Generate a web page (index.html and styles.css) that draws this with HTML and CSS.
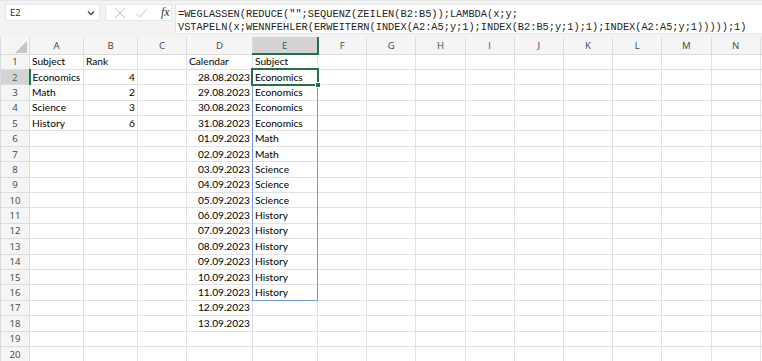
FILE: index.html
```html
<!DOCTYPE html>
<html lang="en">

<head>
    <meta charset="UTF-8">
    <title>Sheet</title>
    <link rel="stylesheet" href="styles.css">
</head>

<body>
    <div class="bar">
        <div class="namebox">
            <span>E2</span>
            <svg class="chev" width="8" height="6" viewBox="0 0 8 6"><path d="M1 1.5 L4 4.5 L7 1.5" fill="none" stroke="#444" stroke-width="1.3"/></svg>
        </div>
        <div class="fxbox">
            <svg width="12" height="12" viewBox="0 0 12 12"><path d="M1 1 L11 11 M11 1 L1 11" stroke="#c4c4c4" stroke-width="1"/></svg>
            <svg width="13" height="12" viewBox="0 0 13 12"><path d="M1 6.5 L4.5 10 L12 2" fill="none" stroke="#c4c4c4" stroke-width="1"/></svg>
            <span class="fx">fx</span>
        </div>
        <div class="formula">=WEGLASSEN(REDUCE("";SEQUENZ(ZEILEN(B2:B5));LAMBDA(x;y;<br>VSTAPELN(x;WENNFEHLER(ERWEITERN(INDEX(A2:A5;y;1);INDEX(B2:B5;y;1);1);INDEX(A2:A5;y;1)))));1)</div>
    </div>

    <div class="sheet">
        <table class="grid">
            <colgroup>
                <col class="c-row">
                <col class="c-a"><col class="c-b"><col class="c-c"><col class="c-d"><col class="c-e">
                <col class="c-n"><col class="c-n"><col class="c-n"><col class="c-n"><col class="c-n">
                <col class="c-n"><col class="c-n"><col class="c-n"><col class="c-n"><col class="c-n">
            </colgroup>
            <tr class="head">
                <th class="corner"><svg width="12" height="12" viewBox="0 0 12 12"><polygon points="12,0 12,12 0,12" fill="#c6c6c6"/></svg></th>
                <th>A</th><th>B</th><th>C</th><th>D</th><th class="on">E</th><th>F</th><th>G</th><th>H</th><th>I</th><th>J</th><th>K</th><th>L</th><th>M</th><th>N</th><th></th>
            </tr>
            <tr><th>1</th><td>Subject</td><td>Rank</td><td></td><td>Calendar</td><td>Subject</td><td></td><td></td><td></td><td></td><td></td><td></td><td></td><td></td><td></td><td></td></tr>
            <tr><th class="on">2</th><td>Economics</td><td class="num">4</td><td></td><td class="num">28.08.2023</td><td>Economics</td><td></td><td></td><td></td><td></td><td></td><td></td><td></td><td></td><td></td><td></td></tr>
            <tr><th>3</th><td>Math</td><td class="num">2</td><td></td><td class="num">29.08.2023</td><td>Economics</td><td></td><td></td><td></td><td></td><td></td><td></td><td></td><td></td><td></td><td></td></tr>
            <tr><th>4</th><td>Science</td><td class="num">3</td><td></td><td class="num">30.08.2023</td><td>Economics</td><td></td><td></td><td></td><td></td><td></td><td></td><td></td><td></td><td></td><td></td></tr>
            <tr><th>5</th><td>History</td><td class="num">6</td><td></td><td class="num">31.08.2023</td><td>Economics</td><td></td><td></td><td></td><td></td><td></td><td></td><td></td><td></td><td></td><td></td></tr>
            <tr><th>6</th><td></td><td></td><td></td><td class="num">01.09.2023</td><td>Math</td><td></td><td></td><td></td><td></td><td></td><td></td><td></td><td></td><td></td><td></td></tr>
            <tr><th>7</th><td></td><td></td><td></td><td class="num">02.09.2023</td><td>Math</td><td></td><td></td><td></td><td></td><td></td><td></td><td></td><td></td><td></td><td></td></tr>
            <tr><th>8</th><td></td><td></td><td></td><td class="num">03.09.2023</td><td>Science</td><td></td><td></td><td></td><td></td><td></td><td></td><td></td><td></td><td></td><td></td></tr>
            <tr><th>9</th><td></td><td></td><td></td><td class="num">04.09.2023</td><td>Science</td><td></td><td></td><td></td><td></td><td></td><td></td><td></td><td></td><td></td><td></td></tr>
            <tr><th>10</th><td></td><td></td><td></td><td class="num">05.09.2023</td><td>Science</td><td></td><td></td><td></td><td></td><td></td><td></td><td></td><td></td><td></td><td></td></tr>
            <tr><th>11</th><td></td><td></td><td></td><td class="num">06.09.2023</td><td>History</td><td></td><td></td><td></td><td></td><td></td><td></td><td></td><td></td><td></td><td></td></tr>
            <tr><th>12</th><td></td><td></td><td></td><td class="num">07.09.2023</td><td>History</td><td></td><td></td><td></td><td></td><td></td><td></td><td></td><td></td><td></td><td></td></tr>
            <tr><th>13</th><td></td><td></td><td></td><td class="num">08.09.2023</td><td>History</td><td></td><td></td><td></td><td></td><td></td><td></td><td></td><td></td><td></td><td></td></tr>
            <tr><th>14</th><td></td><td></td><td></td><td class="num">09.09.2023</td><td>History</td><td></td><td></td><td></td><td></td><td></td><td></td><td></td><td></td><td></td><td></td></tr>
            <tr><th>15</th><td></td><td></td><td></td><td class="num">10.09.2023</td><td>History</td><td></td><td></td><td></td><td></td><td></td><td></td><td></td><td></td><td></td><td></td></tr>
            <tr><th>16</th><td></td><td></td><td></td><td class="num">11.09.2023</td><td>History</td><td></td><td></td><td></td><td></td><td></td><td></td><td></td><td></td><td></td><td></td></tr>
            <tr><th>17</th><td></td><td></td><td></td><td class="num">12.09.2023</td><td></td><td></td><td></td><td></td><td></td><td></td><td></td><td></td><td></td><td></td><td></td></tr>
            <tr><th>18</th><td></td><td></td><td></td><td class="num">13.09.2023</td><td></td><td></td><td></td><td></td><td></td><td></td><td></td><td></td><td></td><td></td><td></td></tr>
            <tr><th>19</th><td></td><td></td><td></td><td></td><td></td><td></td><td></td><td></td><td></td><td></td><td></td><td></td><td></td><td></td><td></td></tr>
            <tr><th>20</th><td></td><td></td><td></td><td></td><td></td><td></td><td></td><td></td><td></td><td></td><td></td><td></td><td></td><td></td><td></td></tr>
        </table>

        <!-- spill range E2:E16 and active cell E2 -->
        <div class="spill"></div>
        <div class="active"><span class="handle"></span></div>
    </div>
</body>

</html>
```

FILE: styles.css
```css
body {
    margin: 0;
    background: #fff;
    font-family: Lato, "Liberation Sans", sans-serif;
    overflow: hidden;
}

.bar {
    display: flex;
    align-items: flex-start;
    height: 37px;
    box-sizing: border-box;
    padding: 4px 0 0 5px;
    background: #f3f3f3;
    border-top: 1px solid #e4e4e4;
}

.namebox {
    display: flex;
    align-items: center;
    justify-content: space-between;
    width: 95px;
    height: 17px;
    box-sizing: border-box;
    margin-top: -1px;
    padding: 0 4px 0 4px;
    background: #fff;
    border: 1px solid #e6e6e6;
    font-family: "Open Sans", sans-serif;
    font-size: 9.5px;
    color: #222;
}

.fxbox {
    display: flex;
    align-items: center;
    gap: 9px;
    width: 67px;
    height: 17px;
    box-sizing: border-box;
    margin: -1px 0 0 5px;
    padding: 0 0 0 8px;
    background: #fff;
    border: 1px solid #e6e6e6;
}

.fx {
    font-family: "Liberation Serif", serif;
    font-style: italic;
    font-size: 12px;
    color: #333;
    margin-left: 4px;
}

.formula {
    flex: 1;
    height: 30px;
    box-sizing: border-box;
    margin: -1px 0 0 3px;
    padding: 3px 2px 0 2px;
    background: #fff;
    border: 1px solid #e6e6e6;
    border-right: 0;
    font-family: "Liberation Mono", monospace;
    font-size: 10.3px;
    line-height: 12.8px;
    color: #222;
    white-space: nowrap;
    overflow: hidden;
}

.sheet {
    position: relative;
    width: 762px;
    overflow: hidden;
}

.grid {
    table-layout: fixed;
    border-collapse: collapse;
    width: 775px;
    font-size: 10.2px;
    color: #000;
}

.c-row { width: 29px; }
.c-a { width: 54px; }
.c-b { width: 54px; }
.c-c { width: 49px; }
.c-d { width: 66px; }
.c-e { width: 65px; }
.c-n { width: 49.2px; }

.grid tr {
    height: 15.4px;
}

.grid tr.head {
    height: 17px;
}

.grid td {
    padding: 0 2px;
    border: 1px solid #e2e2e2;
    white-space: nowrap;
    overflow: hidden;
    line-height: 13px;
}

.grid td.num {
    text-align: right;
}

.grid th {
    padding: 0;
    font-family: "Open Sans", sans-serif;
    font-weight: normal;
    font-size: 9.6px;
    line-height: 13px;
    color: #444;
    background: #f5f5f5;
    border: 1px solid #dcdcdc;
    text-align: center;
}

.grid tr.head th {
    border-top: 0;
}

.grid th.corner {
    text-align: right;
    vertical-align: bottom;
    line-height: 0;
    padding: 0 2px 1px 0;
}

.grid tr.head th.on {
    background: #d3d3d3;
    color: #1e6b41;
    border-bottom: 2px solid #217346;
}

.grid th.on {
    background: #d3d3d3;
    color: #1e6b41;
    border-right: 2px solid #217346;
}

.spill {
    position: absolute;
    left: 252px;
    top: 32px;
    width: 66px;
    height: 232px;
    box-sizing: border-box;
    border: 1px solid #6b9be0;
}

.active {
    position: absolute;
    left: 251px;
    top: 31px;
    width: 68px;
    height: 18px;
    box-sizing: border-box;
    border: 2px solid #217346;
}

.handle {
    position: absolute;
    right: -4px;
    bottom: -4px;
    width: 4px;
    height: 4px;
    background: #217346;
    border: 1px solid #fff;
}
```
